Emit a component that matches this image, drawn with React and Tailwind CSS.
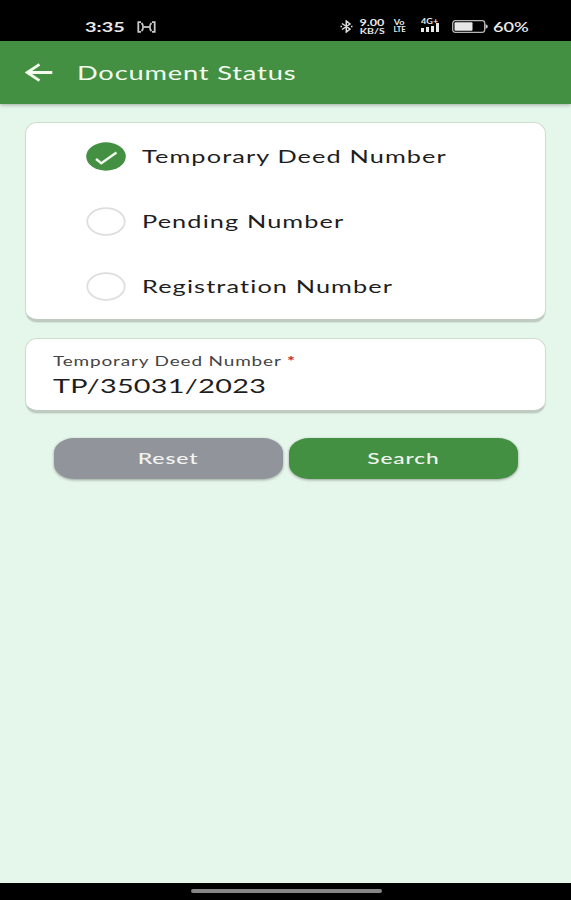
import React, { useState } from 'react';

const OPTIONS = [
  { id: 'temporary', label: 'Temporary Deed Number' },
  { id: 'pending', label: 'Pending Number' },
  { id: 'registration', label: 'Registration Number' }
];

const CARD = 'rounded-[12px] border border-[#cfdcd2] border-b-[3px] border-b-[#bfcbc1] bg-white shadow-[0_1px_1px_rgba(0,0,0,0.08)]';

const StatusBar = () => (
  <div className="flex h-[41px] shrink-0 items-start bg-black pt-[18px] text-[#e8e8e8]">
    <span className="ml-[85px] w-[52px] text-[14px] leading-[17px] font-bold">
      <span className="inline-block origin-left scale-x-[1.42]">3:35</span>
    </span>
    {/* Hotspot */}
    <svg className="mt-[3px]" width="19" height="12" viewBox="0 0 19 12" fill="none" stroke="#c8c8c8" strokeWidth="1.8">
      <path d="M4 1.2H1.3v9.6H4M4.5 2c2.2 2 2.2 6 0 8M15 1.2h2.7v9.6H15M14.5 2c-2.2 2-2.2 6 0 8" />
      <path d="M7 6h5" />
    </svg>
    <svg className="mt-[2px] ml-[184px]" width="13" height="13" viewBox="0 0 13 13" fill="none" stroke="#dedede" strokeWidth="1.5">
      <path d="M2 3.5l8 5.5-3.7 3V1L10 4 2 9.5M0.5 6.5h1.5M11 6.5h1.5" />
    </svg>
    <div className="ml-[5px] flex w-[28px] flex-col items-center font-bold">
      <span className="scale-x-[1.4] text-[9px] leading-[9px]">9.00</span>
      <span className="scale-x-[1.5] text-[7px] leading-[8px]">KB/S</span>
    </div>
    <div className="mt-[1px] ml-[7px] flex w-[13px] flex-col items-center font-bold">
      <span className="scale-x-[1.3] text-[7px] leading-[7px]">Vo</span>
      <span className="scale-x-[1.1] text-[7px] leading-[7px]">LTE</span>
    </div>
    <div className="ml-[13px] flex w-[22px] flex-col items-center">
      <span className="scale-x-[1.3] text-[7px] leading-[7px] font-bold">4G+</span>
      <div className="flex h-[7px] items-end gap-[2px]">
        <i className="h-[4px] w-[3px] bg-[#e8e8e8]" />
        <i className="h-[5px] w-[3px] bg-[#e8e8e8]" />
        <i className="h-[6px] w-[3px] bg-[#e8e8e8]" />
        <i className="h-[9px] w-[3px] bg-[#e8e8e8]" />
      </div>
    </div>
    <svg className="mt-[2px] ml-[11px]" width="36" height="13" viewBox="0 0 36 13">
      <rect x="0.7" y="0.7" width="32" height="11.6" rx="2.5" fill="none" stroke="#b5b5b5" strokeWidth="1.3" />
      <rect x="2.5" y="2.3" width="18" height="8.4" rx="1" fill="#e8e8e8" />
      <path d="M33.5 4l2.2 1.5v2L33.5 9z" fill="#c8c8c8" />
    </svg>
    <span className="ml-[5px] w-[36px] text-[14px] leading-[17px] font-semibold">
      <span className="inline-block origin-left scale-x-[1.3]">60%</span>
    </span>
  </div>
);

const Header = () => (
  <header className="z-10 flex h-[63px] shrink-0 items-center bg-[#439042] pl-[25px] text-[#f3fbef] shadow-[0_1px_4px_rgba(0,0,0,0.3)]">
    <svg width="28" height="19" viewBox="0 0 28 19" fill="none" stroke="currentColor" strokeWidth="2.8">
      <path d="M27.3 9.5H2.5M14.5 1.3L2.2 9.5l12.3 8.2" />
    </svg>
    <h1 className="mb-[2px] ml-[24px] origin-left scale-x-[1.364] text-[20px] leading-6 tracking-[0.6px] whitespace-nowrap">
      Document Status
    </h1>
  </header>
);

const Radio = ({ checked }) => (
  <svg width="40" height="29" viewBox="0 0 40 29" fill="none">
    {checked ? (
      <>
        <ellipse cx="20" cy="14.5" rx="19.8" ry="14.2" fill="#439042" />
        <path d="M10 17l5.3 4.3L30.5 10.5" stroke="#f1faef" strokeWidth="2.4" />
      </>
    ) : (
      <ellipse cx="20" cy="14.5" rx="18.7" ry="13.3" fill="#fff" stroke="#dedede" strokeWidth="1.8" />
    )}
  </svg>
);

const App = () => {
  const [selected, setSelected] = useState('temporary');

  return (
    <div className="flex h-[900px] w-[571px] flex-col overflow-hidden bg-[#e5f6ea] font-['Lato',sans-serif] text-[#1e1e1e]">
      <StatusBar />
      <Header />

      <main className="flex-1 px-[25px] pt-[18px]">
        <div className={`h-[200px] pt-[19px] ${CARD}`}>
          {OPTIONS.map(option => (
            <button
              key={option.id}
              onClick={() => setSelected(option.id)}
              className="mb-[36px] flex h-[29px] items-center pl-[60px]"
            >
              <Radio checked={selected === option.id} />
              <span className="mb-[2px] ml-[16px] origin-left scale-x-[1.405] text-[18px] leading-6 tracking-[0.8px] whitespace-nowrap">
                {option.label}
              </span>
            </button>
          ))}
        </div>

        <div className={`mt-[16px] h-[75px] pt-[13px] pl-[27px] ${CARD}`}>
          <div className="w-fit origin-left scale-x-[1.405] text-[13.5px] leading-[18px] tracking-[0.6px] text-[#444]">
            Temporary Deed Number <span className="font-bold text-[#c62828]">*</span>
          </div>
          <div className="mt-[3px] w-fit origin-left scale-x-[1.44] text-[20px] leading-[25px] tracking-[0.2px]">TP/35031/2023</div>
        </div>

        <div className="mt-[25px] flex gap-[6px] pl-[29px] text-[16px] font-medium text-[#f1f5ef]">
          <button className="h-[41px] w-[229px] rounded-[20px/15px] bg-[#92949c] pb-[2px] shadow-[0_1px_3px_rgba(0,0,0,0.35)]">
            <span className="inline-block scale-x-[1.44] tracking-[0.6px]">Reset</span>
          </button>
          <button className="h-[41px] w-[229px] rounded-[20px/15px] bg-[#439042] pb-[2px] shadow-[0_1px_3px_rgba(0,0,0,0.35)]">
            <span className="inline-block scale-x-[1.42] tracking-[0.6px]">Search</span>
          </button>
        </div>
      </main>

      <footer className="flex h-[17px] shrink-0 justify-center bg-black pt-[6px] pl-[2px]">
        <div className="h-[4px] w-[191px] rounded-full bg-[#858585]" />
      </footer>
    </div>
  );
};

export default App;
